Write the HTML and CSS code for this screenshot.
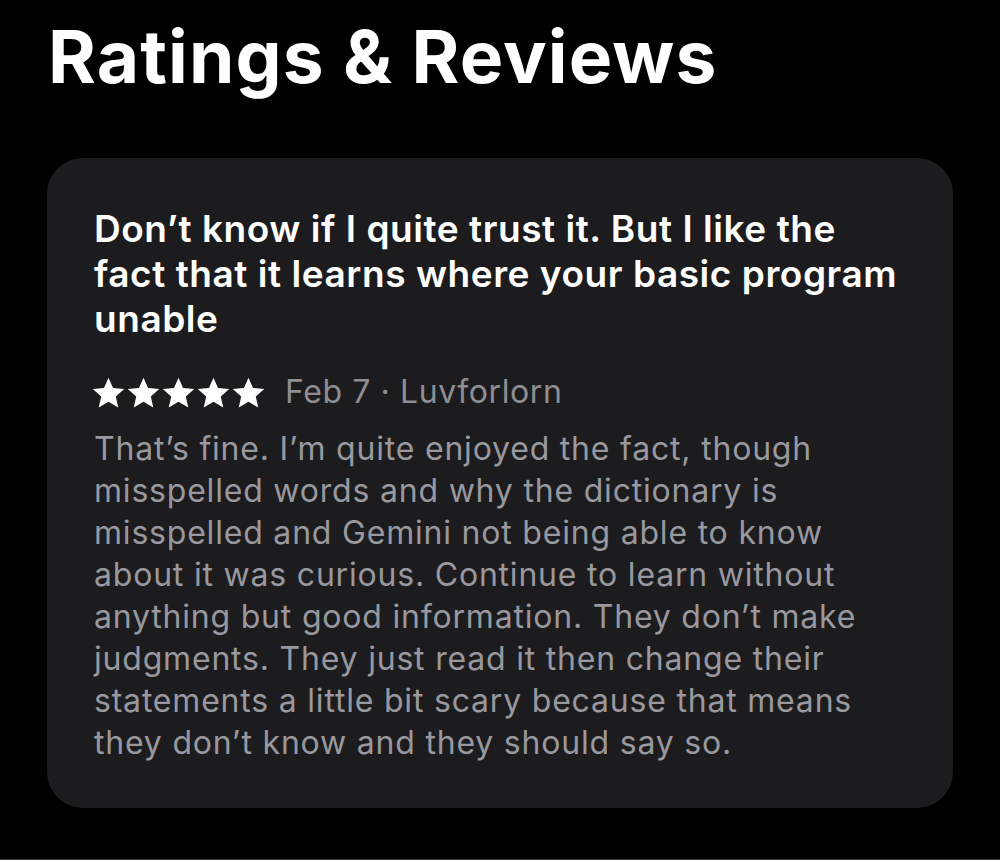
FILE: index.html
```html
<!DOCTYPE html>
<html>
<head>
<meta charset="utf-8">
<link rel="stylesheet" href="styles.css">
</head>
<body>
<main class="page">
  <h1 class="heading">Ratings &amp; Reviews</h1>
  <section class="card">
    <h2 class="review-title">Don’t know if I quite trust it. But I like the fact that it learns where your basic program unable</h2>
    <div class="meta">
      <span class="stars">
        <svg class="star" viewBox="0 0 24 24"><path d="M12 1.8l3.1 7.1 7.7.7-5.8 5.1 1.7 7.6L12 18.3l-6.7 4 1.7-7.6L1.2 9.6l7.7-.7z"/></svg>
        <svg class="star" viewBox="0 0 24 24"><path d="M12 1.8l3.1 7.1 7.7.7-5.8 5.1 1.7 7.6L12 18.3l-6.7 4 1.7-7.6L1.2 9.6l7.7-.7z"/></svg>
        <svg class="star" viewBox="0 0 24 24"><path d="M12 1.8l3.1 7.1 7.7.7-5.8 5.1 1.7 7.6L12 18.3l-6.7 4 1.7-7.6L1.2 9.6l7.7-.7z"/></svg>
        <svg class="star" viewBox="0 0 24 24"><path d="M12 1.8l3.1 7.1 7.7.7-5.8 5.1 1.7 7.6L12 18.3l-6.7 4 1.7-7.6L1.2 9.6l7.7-.7z"/></svg>
        <svg class="star" viewBox="0 0 24 24"><path d="M12 1.8l3.1 7.1 7.7.7-5.8 5.1 1.7 7.6L12 18.3l-6.7 4 1.7-7.6L1.2 9.6l7.7-.7z"/></svg>
      </span>
      <span class="meta-text">Feb 7 · Luvforlorn</span>
    </div>
    <p class="review-body">That’s fine. I’m quite enjoyed the fact, though misspelled words and why the dictionary is misspelled and Gemini not being able to know about it was curious. Continue to learn without anything but good information. They don’t make judgments. They just read it then change their statements a little bit scary because that means they don’t know and they should say so.</p>
  </section>
</main>
<div class="bottom-line"></div>
</body>
</html>
```
FILE: styles.css
```css
html, body {
  margin: 0;
  padding: 0;
  background: #000;
  height: 860px;
  overflow: hidden;
}
body {
  font-family: Inter, "Noto Sans", sans-serif;
  color: #fff;
  position: relative;
}
.page {
  padding: 0 47px;
}
.heading {
  margin: 0;
  padding: 12px 0 0 1px;
  font-size: 73px;
  line-height: 90px;
  font-weight: 700;
  letter-spacing: 1.1px;
  height: 146px;
}
.card {
  background: #1c1c1e;
  border-radius: 36px;
  padding: 48px 40px 0 47px;
  height: 650px;
  box-sizing: border-box;
}
.review-title {
  margin: 0;
  font-size: 37px;
  line-height: 45px;
  font-weight: 600;
  letter-spacing: 0.55px;
}
.meta {
  display: flex;
  align-items: center;
  gap: 19px;
  margin-top: 31px;
  height: 40px;
}
.stars {
  display: flex;
  gap: 0;
  margin-left: -3px;
}
.star {
  width: 35px;
  height: 35px;
  fill: #fff;
}
.meta-text {
  font-size: 32px;
  line-height: 40px;
  letter-spacing: 0.6px;
  color: #8e8e93;
}
.review-body {
  margin: 16px 0 0;
  font-size: 32px;
  line-height: 42px;
  letter-spacing: 0.8px;
  color: #98989e;
}
.bottom-line {
  position: absolute;
  left: 0;
  right: 0;
  bottom: 0;
  height: 1px;
  background: #3a3a3c;
}
```
